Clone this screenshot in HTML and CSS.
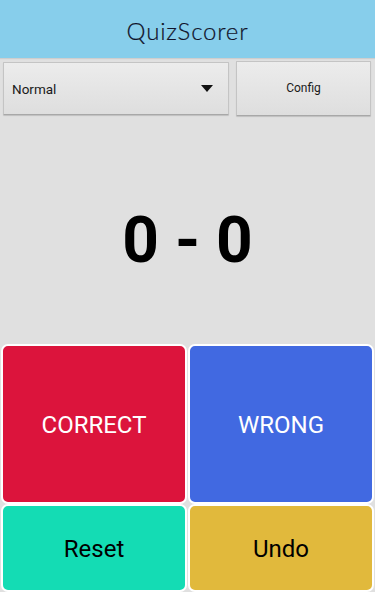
FILE: index.html
```html
<!DOCTYPE html>
<html>
<head>
<meta charset="utf-8">
<link rel="stylesheet" href="styles.css">
</head>
<body>
<div class="app">
  <header class="header"><h1 class="title">QuizScorer</h1></header>
  <div class="controls">
    <div class="select">
      <span class="select-label">Normal</span>
      <svg class="caret" width="12" height="7" viewBox="0 0 12 7"><path d="M0 0H12L6 7Z" fill="#111"/></svg>
    </div>
    <div class="config">Config</div>
  </div>
  <div class="score">0 - 0</div>
  <div class="pad">
    <div class="btn correct">CORRECT</div>
    <div class="btn wrong">WRONG</div>
    <div class="btn reset">Reset</div>
    <div class="btn undo">Undo</div>
  </div>
</div>
</body>
</html>
```

FILE: styles.css
```css
html, body {
  margin: 0;
  padding: 0;
}
body {
  background: #e0e0e0;
  font-family: Roboto, "Liberation Sans", sans-serif;
}
.app {
  width: 375px;
  height: 592px;
  display: flex;
  flex-direction: column;
  overflow: hidden;
}
.header {
  height: 58px;
  background: #87ceeb;
  display: flex;
  align-items: center;
  justify-content: center;
  box-shadow: 0 1px 1px rgba(0,0,0,0.08);
}
.title {
  margin: 0;
  font-family: Lato, "Open Sans", sans-serif;
  font-weight: 300;
  font-size: 24px;
  letter-spacing: 0.8px;
  color: #10122a;
  padding-top: 3px;
  -webkit-text-stroke: 0.2px #10122a;
}
.controls {
  height: 58px;
  display: flex;
  align-items: center;
  gap: 7px;
  padding: 2px 4px 0 3px;
  box-sizing: border-box;
}
.select {
  width: 226px;
  height: 53px;
  box-sizing: border-box;
  display: flex;
  align-items: center;
  justify-content: space-between;
  padding: 0 15px 0 8px;
  background: linear-gradient(#ececec, #dedede);
  border: 1px solid #c4c4c4;
  border-bottom-color: #a8a8a8;
  box-shadow: 0 1px 1px rgba(0,0,0,0.15);
  border-radius: 1px;
}
.select-label {
  font-size: 13.5px;
  color: #1a1a1a;
  padding-top: 1px;
}
.caret {
  display: block;
  margin-top: 1px;
}
.config {
  flex: 1;
  height: 55px;
  box-sizing: border-box;
  display: flex;
  align-items: center;
  justify-content: center;
  font-size: 12px;
  color: #1a1a1a;
  background: linear-gradient(#ececec, #dedede);
  border: 1px solid #c4c4c4;
  border-bottom-color: #a8a8a8;
  box-shadow: 0 1px 1px rgba(0,0,0,0.15);
  border-radius: 1px;
}
.score {
  flex: 1;
  display: flex;
  align-items: center;
  justify-content: center;
  font-weight: 700;
  font-size: 64px;
  color: #000;
  padding-top: 20px;
}
.pad {
  display: grid;
  grid-template-columns: 1fr 1fr;
  grid-template-rows: 160px 88px;
  gap: 0 1px;
  padding: 0 1px 0 1px;
}
.btn {
  border: 2px solid #fff;
  border-radius: 7px;
  display: flex;
  align-items: center;
  justify-content: center;
  font-size: 24px;
  padding-top: 2px;
}
.correct {
  background: #dc143c;
  color: #fff;
}
.wrong {
  background: #4169e1;
  color: #fff;
}
.reset {
  background: #14dcb4;
  color: #000;
}
.undo {
  background: #e1b93c;
  color: #000;
}
```
